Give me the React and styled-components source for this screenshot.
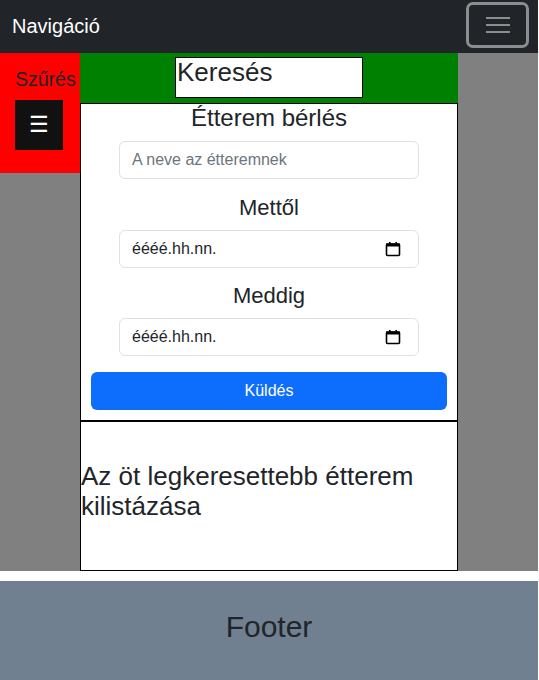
import styled, { createGlobalStyle } from "styled-components";

const GlobalStyle = createGlobalStyle`
  * { box-sizing: border-box; }
  body {
    margin: 0;
    font-family: "Liberation Sans", Arial, sans-serif;
    color: #212529;
    background: #fff;
  }
`;

const Page = styled.div`
  width: 538px;
`;

const NavBar = styled.nav`
  height: 53px;
  background: #212529;
  display: flex;
  align-items: center;
  justify-content: space-between;
  padding: 0 9px 0 12px;
`;

const Brand = styled.span`
  color: #fff;
  font-size: 20px;
`;

const Toggler = styled.button`
  width: 63px;
  height: 46px;
  margin-top: -3px;
  border: 3px solid #8c8d8f;
  border-radius: 7px;
  background: transparent;
  display: flex;
  align-items: center;
  justify-content: center;
  padding: 0;
`;

const Main = styled.div`
  display: flex;
  align-items: flex-start;
  background: #808080;
`;

const FilterCol = styled.aside`
  width: 80px;
  height: 120px;
  background: #ff0000;
  padding: 14px 0 0 15px;
  overflow: hidden;
`;

const FilterTitle = styled.div`
  font-size: 19.5px;
  line-height: 24px;
  white-space: nowrap;
`;

const FilterButton = styled.button`
  margin-top: 9px;
  width: 48px;
  height: 50px;
  border: none;
  background: #111;
  color: #fff;
  font-size: 22px;
  padding: 0;
  display: flex;
  align-items: center;
  justify-content: center;
`;

const Center = styled.section`
  width: 378px;
  display: flex;
  flex-direction: column;
`;

const SearchBar = styled.div`
  height: 50px;
  background: #008000;
  display: flex;
  justify-content: center;
  padding-top: 4px;
`;

const SearchBox = styled.div`
  width: 188px;
  height: 41px;
  background: #fff;
  border: 1px solid #000;
  font-size: 26px;
  line-height: 28px;
  padding-left: 1px;
`;

const Card = styled.div`
  background: #fff;
  border: 1px solid #000;
  height: ${(p) => p.$h}px;
`;

const Form = styled.form`
  display: flex;
  flex-direction: column;
  align-items: center;
  padding: 0 10px;
`;

const Title = styled.h4`
  margin: 0;
  font-weight: 400;
  font-size: 24px;
  line-height: 28px;
  margin-bottom: 9px;
`;

const Label = styled.label`
  font-size: 22px;
  line-height: 26.5px;
  margin: 15.5px 0 8.5px;
`;

const Field = styled.div`
  width: 300px;
  height: 38px;
  border: 1px solid #dee2e6;
  border-radius: 6px;
  display: flex;
  align-items: center;
  justify-content: space-between;
  padding: 0 17px 0 12px;
  font-size: 16px;
  color: ${(p) => (p.$placeholder ? "#6c757d" : "#212529")};
`;

const Submit = styled.button`
  width: 356px;
  height: 38px;
  margin-top: 16px;
  border: none;
  border-radius: 6px;
  background: #0d6efd;
  color: #fff;
  font-family: inherit;
  font-size: 16px;
`;

const TopList = styled.h3`
  margin: 0;
  padding-top: 39px;
  font-weight: 400;
  font-size: 26px;
  line-height: 30px;
`;

const Side = styled.div`
  flex: 1;
`;

const Gap = styled.div`
  height: 10px;
`;

const Footer = styled.footer`
  height: 99px;
  background: #708090;
  display: flex;
  align-items: center;
  justify-content: center;
  font-size: 30px;
  color: #212529;
  padding-bottom: 8px;
`;

const Burger = () => (
  <svg width="26" height="22" viewBox="0 0 26 22">
    <g stroke="#8c8d8f" strokeWidth="2">
      <line x1="1" y1="4" x2="25" y2="4" />
      <line x1="1" y1="11" x2="25" y2="11" />
      <line x1="1" y1="18" x2="25" y2="18" />
    </g>
  </svg>
);

const CalendarIcon = () => (
  <svg width="16" height="16" viewBox="0 0 16 16">
    <rect x="1.5" y="3" width="13" height="11.5" rx="1" fill="none" stroke="#000" strokeWidth="1.6" />
    <rect x="1" y="2.5" width="14" height="3" fill="#000" />
    <rect x="4" y="1" width="1.6" height="2" fill="#000" />
    <rect x="10.4" y="1" width="1.6" height="2" fill="#000" />
  </svg>
);

const DateField = () => (
  <Field>
    <span>éééé.hh.nn.</span>
    <CalendarIcon />
  </Field>
);

export default function App() {
  return (
    <Page>
      <GlobalStyle />
      <NavBar>
        <Brand>Navigáció</Brand>
        <Toggler>
          <Burger />
        </Toggler>
      </NavBar>
      <Main>
        <FilterCol>
          <FilterTitle>Szűrés</FilterTitle>
          <FilterButton>☰</FilterButton>
        </FilterCol>
        <Center>
          <SearchBar>
            <SearchBox>Keresés</SearchBox>
          </SearchBar>
          <Card $h={318}>
            <Form>
              <Title>Étterem bérlés</Title>
              <Field $placeholder>A neve az étteremnek</Field>
              <Label>Mettől</Label>
              <DateField />
              <Label>Meddig</Label>
              <DateField />
              <Submit type="button">Küldés</Submit>
            </Form>
          </Card>
          <Card $h={150}>
            <TopList>Az öt legkeresettebb étterem kilistázása</TopList>
          </Card>
        </Center>
        <Side />
      </Main>
      <Gap />
      <Footer>Footer</Footer>
    </Page>
  );
}
